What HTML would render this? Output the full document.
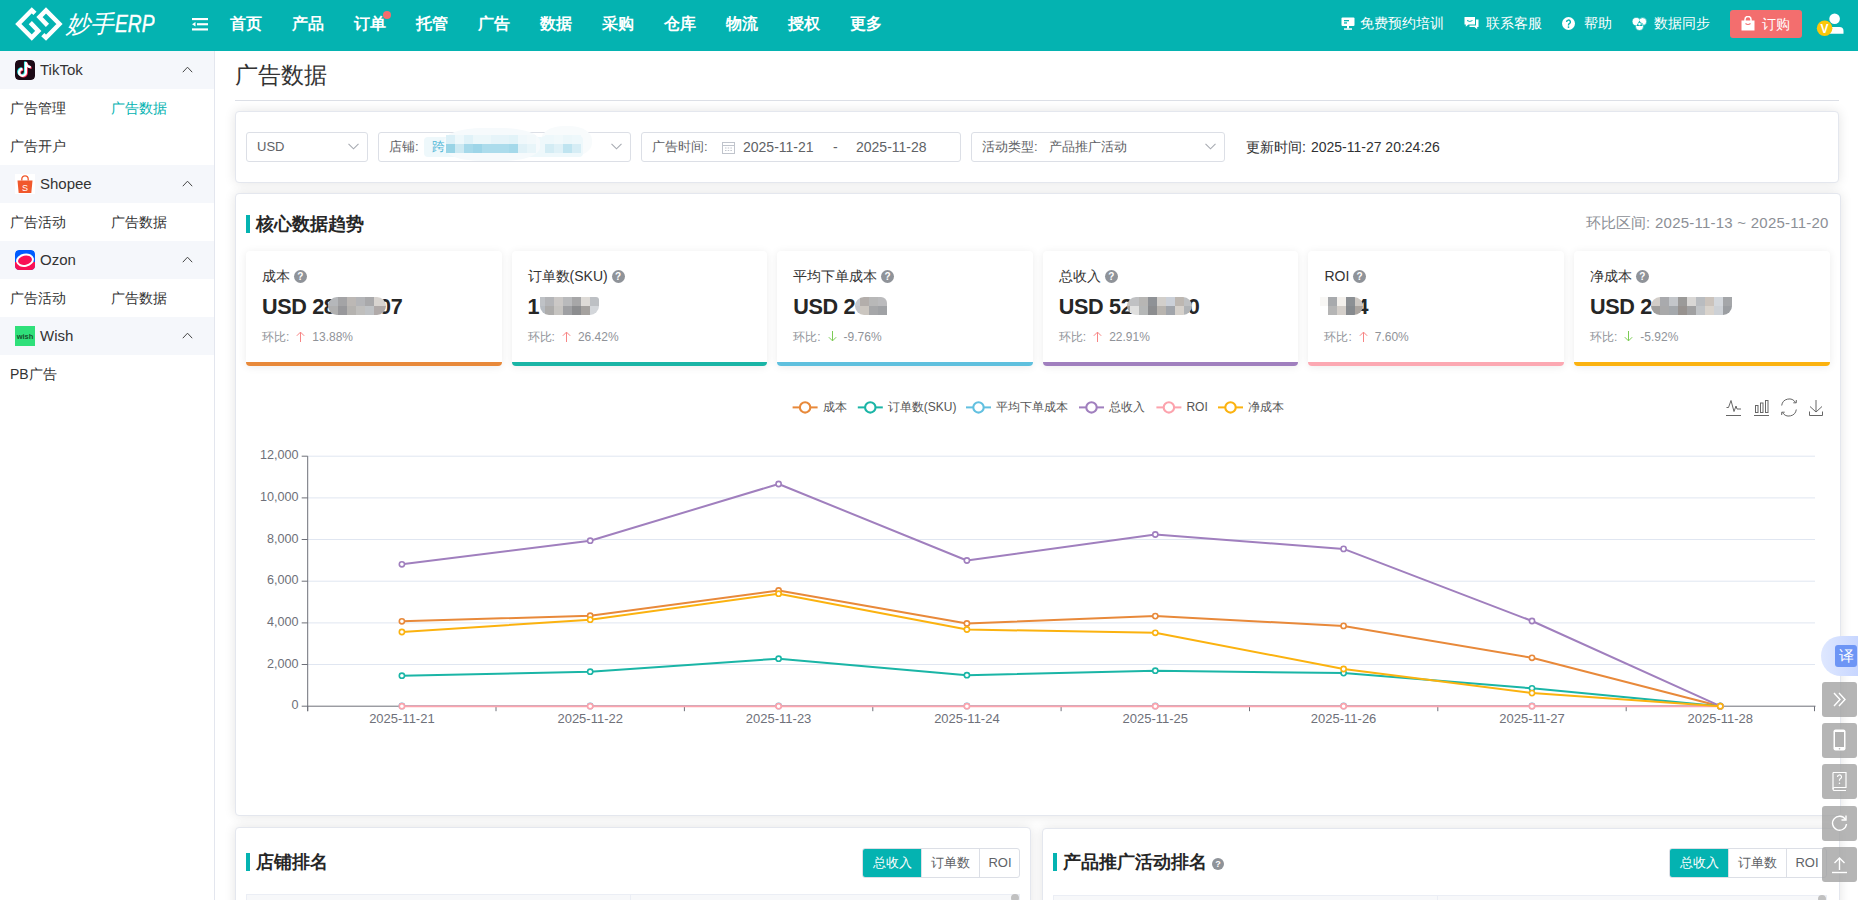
<!DOCTYPE html>
<html><head><meta charset="utf-8">
<style>
*{margin:0;padding:0;box-sizing:border-box}
html,body{width:1858px;height:900px;overflow:hidden;background:#fff;font-family:"Liberation Sans",sans-serif;color:#333}
.abs{position:absolute}
#hdr{position:absolute;left:0;top:0;width:1858px;height:51px;background:#04b3b1}
.nav{position:absolute;top:12.5px;font-size:16px;font-weight:bold;color:#fff;line-height:22px;white-space:nowrap}
.rnav{position:absolute;top:14px;font-size:14px;color:#fff;line-height:18px;white-space:nowrap}
#side{position:absolute;left:0;top:51px;width:215px;height:849px;background:#fff;border-right:1px solid #e3e6ee}
.gh{position:absolute;left:0;width:214px;height:38px;background:#f5f7fb}
.gh .t{position:absolute;left:40px;top:9px;font-size:15px;line-height:20px;color:#333}
.gh .ic{position:absolute;left:15px;top:9px;width:20px;height:20px;border-radius:4px}
.gh svg.chev{position:absolute;left:182px;top:15px}
.si{position:absolute;font-size:14px;line-height:18px;color:#333;white-space:nowrap}
.card{position:absolute;background:#fff;border:1px solid #e4e7ee;border-radius:4px;box-shadow:0 0 12px rgba(0,0,0,0.11)}
.sel{position:absolute;height:30px;border:1px solid #dcdfe6;border-radius:3px;background:#fff;font-size:13px;color:#606266;line-height:28px;white-space:nowrap}
.chevd{position:absolute;top:10px}
.ttl{position:absolute;font-size:18px;font-weight:bold;color:#262626;line-height:22px;white-space:nowrap}
.bar{position:absolute;width:4px;height:18px;background:#04b3b1}
.kpi{position:absolute;top:251px;width:255.6px;height:115px;background:#fff;border-radius:4px;box-shadow:0 1px 8px rgba(0,0,0,0.08);overflow:hidden}
.kpi .lb{position:absolute;left:16px;top:16px;font-size:14px;line-height:18px;color:#333;white-space:nowrap}
.kpi .val{position:absolute;left:16px;top:42.5px;font-size:21.6px;letter-spacing:-0.35px;font-weight:bold;line-height:26px;color:#262626;white-space:nowrap}
.kpi .hb{position:absolute;left:16px;top:78px;font-size:12px;line-height:16px;color:#909399;white-space:nowrap}
.kpi .bt{position:absolute;left:0;bottom:0;width:100%;height:4px}
.q{display:inline-block;width:13px;height:13px;border-radius:50%;background:#8f9399;color:#fff;font-size:10px;line-height:13px;text-align:center;font-weight:bold;vertical-align:1px}
.mos{position:absolute;display:grid}
.mos i{display:block}
.fb{position:absolute;left:1822px;width:35px;height:35px;background:rgba(160,160,160,0.78);border-radius:3px}
.seg{position:absolute;height:30px;border:1px solid #dcdfe6;border-radius:3px;overflow:hidden;font-size:13px;line-height:28px;color:#606266;white-space:nowrap;background:#fff}
.seg span{position:absolute;top:0;height:28px;text-align:center}
</style></head>
<body>
<!-- HEADER -->
<div id="hdr">
  <svg class="abs" style="left:12px;top:4px" width="54" height="40" viewBox="0 0 1215 900">
    <g fill="none" stroke="#fff" stroke-width="100" stroke-linejoin="miter" stroke-linecap="butt" stroke-miterlimit="10">
      <polyline points="517,212 445,142 142,450 445,755 592,605 412,420"/>
      <polyline points="693,688 765,758 1068,450 765,145 618,295 798,480"/>
    </g>
  </svg>
  <div class="abs" style="left:66px;top:6px;font-size:24px;line-height:36px;color:#fff;font-style:italic;white-space:nowrap">妙手<span style="display:inline-block;transform:scaleX(0.8);transform-origin:0 50%;-webkit-text-stroke:0.4px #fff;margin-left:1px">ERP</span></div>
  <svg class="abs" style="left:192px;top:18px" width="16" height="12.5" viewBox="0 0 16 14" preserveAspectRatio="none">
    <rect x="0" y="0" width="16" height="2.4" fill="#fff"/><rect x="5" y="5.8" width="11" height="2.4" fill="#fff"/><rect x="0" y="11.6" width="16" height="2.4" fill="#fff"/><polygon points="0,7 3.5,4.5 3.5,9.5" fill="#fff"/>
  </svg>
  <div class="nav" style="left:230px">首页</div>
  <div class="nav" style="left:292px">产品</div>
  <div class="nav" style="left:354px">订单</div>
  <div class="abs" style="left:383px;top:11px;width:8px;height:8px;border-radius:50%;background:#f56c6c"></div>
  <div class="nav" style="left:416px">托管</div>
  <div class="nav" style="left:478px">广告</div>
  <div class="nav" style="left:540px">数据</div>
  <div class="nav" style="left:602px">采购</div>
  <div class="nav" style="left:664px">仓库</div>
  <div class="nav" style="left:726px">物流</div>
  <div class="nav" style="left:788px">授权</div>
  <div class="nav" style="left:850px">更多</div>
  <!-- right -->
  <div class="rnav" style="left:1360px">免费预约培训</div>
  <div class="rnav" style="left:1486px">联系客服</div>
  <div class="rnav" style="left:1584px">帮助</div>
  <div class="rnav" style="left:1654px">数据同步</div>
  <div class="abs" style="left:1730px;top:10px;width:72px;height:28px;background:#f36e6e;border-radius:3px"></div>
  <div class="rnav" style="left:1762px;top:15px">订购</div>

  <svg class="abs" style="left:1341px;top:17px" width="14" height="13" viewBox="0 0 14 13"><rect x="0.5" y="0.5" width="13" height="8.5" rx="1" fill="#fff"/><rect x="3" y="3" width="5" height="1.3" fill="#04b3b1"/><rect x="3" y="5.3" width="3" height="1.3" fill="#04b3b1"/><rect x="6" y="9" width="2" height="2.5" fill="#fff"/><rect x="3" y="11.3" width="8" height="1.5" fill="#fff"/></svg>
  <svg class="abs" style="left:1464px;top:16px" width="15" height="14" viewBox="0 0 15 14"><path d="M0.5 1h10.5v7.5H4.5L1.8 10.8V8.5H0.5z" fill="#fff"/><path d="M12 3.5h2.5v7.5h-1.3v2.2L10.5 11H5.5V9.5h6.5z" fill="#fff"/><path d="M3 4.5q2.8 2 5.5 0" fill="none" stroke="#04b3b1" stroke-width="1"/></svg>
  <svg class="abs" style="left:1562px;top:17px" width="13" height="13" viewBox="0 0 13 13"><circle cx="6.5" cy="6.5" r="6.5" fill="#fff"/><path d="M4.6 5a1.9 1.9 0 1 1 2.7 1.7c-.5.3-.8.6-.8 1.2v.5" fill="none" stroke="#04b3b1" stroke-width="1.4"/><circle cx="6.5" cy="10.1" r="0.9" fill="#04b3b1"/></svg>
  <svg class="abs" style="left:1632px;top:16.5px" width="15" height="14" viewBox="0 0 15 14"><g fill="#fff" stroke="#04b3b1" stroke-width="0.7"><circle cx="4.3" cy="4.6" r="4"/><circle cx="10.7" cy="4.6" r="4"/><circle cx="7.5" cy="9.6" r="4"/></g><circle cx="4.3" cy="4.6" r="3.6" fill="#fff"/><polygon points="7.5,3.6 4.4,8.9 10.6,8.9" fill="#04b3b1"/><circle cx="7.5" cy="7.1" r="1.3" fill="#fff"/></svg>
  <svg class="abs" style="left:1741px;top:16px" width="14" height="15" viewBox="0 0 14 15"><path d="M0.5 4.5h13v10h-13z" fill="#fff"/><path d="M4 6.5V3.5a3 3 0 0 1 6 0v3" fill="none" stroke="#fff" stroke-width="1.5"/><path d="M4.5 7.5q2.5 2 5 0" fill="none" stroke="#f36e6e" stroke-width="1.2"/></svg>
  <svg class="abs" style="left:1815px;top:12px" width="32" height="26" viewBox="0 0 32 26"><circle cx="19.6" cy="6.8" r="5.3" fill="#fff"/><path d="M13 21.7V18.5a3.5 3.5 0 0 1 3.5-3.5h8a4 4 0 0 1 4 4v2.7z" fill="#fff"/><circle cx="9.6" cy="16.2" r="7.8" fill="#fbc70a"/><text x="9.6" y="20.6" font-size="12" font-weight="bold" fill="#fff" text-anchor="middle" font-family="Liberation Sans">V</text></svg>
</div>

<!-- SIDEBAR -->
<div id="side">
  <div class="gh" style="top:0">
    <svg class="ic" width="20" height="20" viewBox="0 0 20 20"><rect width="20" height="20" rx="4" fill="#1c0a16"/>
      <g fill="none" stroke-width="2.3">
      <path d="M10.9 2.3V12.4A3.4 3.4 0 1 1 7.5 9" stroke="#25f4ee" transform="translate(-0.8,-0.6)"/>
      <path d="M10.9 2.3C11.3 5.2 13 6.9 15.8 7.2" stroke="#25f4ee" transform="translate(-0.8,-0.6)"/>
      <path d="M10.9 2.3V12.4A3.4 3.4 0 1 1 7.5 9" stroke="#fe2c55" transform="translate(0.8,0.6)"/>
      <path d="M10.9 2.3C11.3 5.2 13 6.9 15.8 7.2" stroke="#fe2c55" transform="translate(0.8,0.6)"/>
      <path d="M10.9 2.3V12.4A3.4 3.4 0 1 1 7.5 9" stroke="#fff"/>
      <path d="M10.9 2.3C11.3 5.2 13 6.9 15.8 7.2" stroke="#fff"/>
      </g>
    </svg>
    <div class="t">TikTok</div><svg class="chev" width="11" height="7" viewBox="0 0 11 7"><polyline points="0.8,6.2 5.5,1.2 10.2,6.2" fill="none" stroke="#444" stroke-width="1"/></svg>
  </div>
  <div class="si" style="left:10px;top:48px">广告管理</div>
  <div class="si" style="left:111px;top:48px;color:#04b3b1">广告数据</div>
  <div class="si" style="left:10px;top:86px">广告开户</div>
  <div class="gh" style="top:114px">
    <svg class="ic" style="border-radius:0" width="20" height="20" viewBox="0 0 20 20"><rect width="20" height="20" fill="#fff"/>
      <path d="M2.5 6.5h15l-1.2 12.5H3.7z" fill="#f1582c"/>
      <path d="M6.8 6.5V5a3.2 3.2 0 0 1 6.4 0v1.5" fill="none" stroke="#f1582c" stroke-width="1.3"/>
      <text x="10" y="16.5" font-size="9" fill="#fff" text-anchor="middle" font-family="Liberation Sans">S</text>
    </svg>
    <div class="t">Shopee</div><svg class="chev" width="11" height="7" viewBox="0 0 11 7"><polyline points="0.8,6.2 5.5,1.2 10.2,6.2" fill="none" stroke="#444" stroke-width="1"/></svg>
  </div>
  <div class="si" style="left:10px;top:162px">广告活动</div>
  <div class="si" style="left:111px;top:162px">广告数据</div>
  <div class="gh" style="top:190px">
    <svg class="ic" width="20" height="20" viewBox="0 0 20 20"><rect width="20" height="20" rx="4" fill="#005bff"/>
      <path d="M0 12H20V16A4 4 0 0 1 16 20H4A4 4 0 0 1 0 16z" fill="#f91155"/>
      <ellipse cx="10" cy="10.2" rx="8" ry="5.6" fill="#f91155" stroke="#fff" stroke-width="2" transform="rotate(-12 10 10.2)"/>
    </svg>
    <div class="t">Ozon</div><svg class="chev" width="11" height="7" viewBox="0 0 11 7"><polyline points="0.8,6.2 5.5,1.2 10.2,6.2" fill="none" stroke="#444" stroke-width="1"/></svg>
  </div>
  <div class="si" style="left:10px;top:238px">广告活动</div>
  <div class="si" style="left:111px;top:238px">广告数据</div>
  <div class="gh" style="top:266px">
    <svg class="ic" style="border-radius:0" width="20" height="20" viewBox="0 0 20 20"><rect width="20" height="20" fill="#2fe07a"/>
      <text x="10" y="12.8" font-size="7.5" font-weight="bold" fill="#17502c" text-anchor="middle" font-family="Liberation Sans">wish</text>
    </svg>
    <div class="t">Wish</div><svg class="chev" width="11" height="7" viewBox="0 0 11 7"><polyline points="0.8,6.2 5.5,1.2 10.2,6.2" fill="none" stroke="#444" stroke-width="1"/></svg>
  </div>
  <div class="si" style="left:10px;top:314px">PB广告</div>
</div>


<!-- MAIN -->
<div class="abs" style="left:235px;top:61px;font-size:23px;line-height:28px;color:#333;white-space:nowrap">广告数据</div>
<div class="abs" style="left:235px;top:100px;width:1604px;height:1px;background:#dcdfe6"></div>

<!-- filter card -->
<div class="card" style="left:235px;top:111px;width:1604px;height:72px"></div>
<div class="sel" style="left:246px;top:132px;width:122px"><span style="position:absolute;left:10px">USD</span><svg class="chevd" style="left:101px" width="11" height="7" viewBox="0 0 11 7"><polyline points="0.5,0.8 5.5,5.8 10.5,0.8" fill="none" stroke="#a8abb2" stroke-width="1.1"/></svg></div>
<div class="sel" style="left:378px;top:132px;width:253px"><span style="position:absolute;left:10px">店铺:</span><svg class="chevd" style="left:232px" width="11" height="7" viewBox="0 0 11 7"><polyline points="0.5,0.8 5.5,5.8 10.5,0.8" fill="none" stroke="#a8abb2" stroke-width="1.1"/></svg></div>
<div class="abs" style="left:424px;top:137px;width:158px;height:20px;background:#eef8fb;border-radius:4px"></div>
<div class="abs" style="left:444px;top:128px;width:96px;height:33px;border-radius:40%;background:#f6fafc"></div>
<div class="abs" style="left:541px;top:126px;width:51px;height:31px;border-radius:45%;background:#f8fbfc"></div>
<div class="abs" style="left:541px;top:136px;width:42px;height:21px;border-radius:4px;background:#eef8fb"></div>
<div class="abs" style="left:432px;top:138px;font-size:13px;line-height:18px;color:#4fb6d6">跨</div>
<div class="mos" style="left:446.4px;top:135px;grid-template-columns:repeat(10,8.94px);grid-template-rows:repeat(2,9px)"><i style="background:#dcf0f7"></i><i style="background:#eef8fb"></i><i style="background:#e0f2f8"></i><i style="background:#ecf7fa"></i><i style="background:#ecf7fa"></i><i style="background:#e6f4f9"></i><i style="background:#e6f4f9"></i><i style="background:#e2f3f8"></i><i style="background:#f0f8fb"></i><i style="background:#f3f9fb"></i><i style="background:#99d4e6"></i><i style="background:#cde9f2"></i><i style="background:#a6d9ea"></i><i style="background:#9dd5e8"></i><i style="background:#acdcec"></i><i style="background:#acdcec"></i><i style="background:#acdcec"></i><i style="background:#a5d9ea"></i><i style="background:#e0f1f7"></i><i style="background:#e8f5f9"></i></div>
<div class="mos" style="left:545px;top:135px;grid-template-columns:repeat(4,8.93px);grid-template-rows:repeat(2,9px)"><i style="background:#eef8fb"></i><i style="background:#f1f9fb"></i><i style="background:#ecf7fa"></i><i style="background:#eef8fb"></i><i style="background:#d3ecf4"></i><i style="background:#dff1f7"></i><i style="background:#bfe4f0"></i><i style="background:#d6edf5"></i></div>
<div class="sel" style="left:641px;top:132px;width:320px"><span style="position:absolute;left:10px">广告时间:</span>
  <svg class="abs" style="left:80px;top:8px" width="13" height="13" viewBox="0 0 13 13"><rect x="0.5" y="1.5" width="12" height="11" fill="none" stroke="#c0c4cc"/><line x1="0.5" y1="4.5" x2="12.5" y2="4.5" stroke="#c0c4cc"/><g fill="#c0c4cc"><rect x="3" y="6.5" width="1.5" height="1"/><rect x="5.7" y="6.5" width="1.5" height="1"/><rect x="8.4" y="6.5" width="1.5" height="1"/><rect x="3" y="9" width="1.5" height="1"/><rect x="5.7" y="9" width="1.5" height="1"/><rect x="8.4" y="9" width="1.5" height="1"/></g></svg>
  <span style="position:absolute;left:101px;font-size:14px">2025-11-21</span>
  <span style="position:absolute;left:191px;font-size:14px">-</span>
  <span style="position:absolute;left:214px;font-size:14px">2025-11-28</span>
</div>
<div class="sel" style="left:971px;top:132px;width:254px"><span style="position:absolute;left:10px">活动类型:</span><span style="position:absolute;left:77px">产品推广活动</span><svg class="chevd" style="left:233px" width="11" height="7" viewBox="0 0 11 7"><polyline points="0.5,0.8 5.5,5.8 10.5,0.8" fill="none" stroke="#a8abb2" stroke-width="1.1"/></svg></div>
<div class="abs" style="left:1246px;top:138px;font-size:14px;line-height:18px;color:#303133;white-space:nowrap">更新时间:<span style="margin-left:5px">2025-11-27 20:24:26</span></div>

<!-- chart card -->
<div class="card" style="left:235px;top:193px;width:1606px;height:623px"></div>
<div class="bar" style="left:246px;top:215px"></div>
<div class="ttl" style="left:256px;top:213px">核心数据趋势</div>
<div id="hbq" class="abs" style="left:1586px;top:214px;font-size:14.5px;line-height:18px;color:#8c8f96;white-space:nowrap">环比区间:<span style="margin-left:5px;font-size:15px;letter-spacing:0.23px">2025-11-13 ~ 2025-11-20</span></div>
<div class="kpi" style="left:246.0px"><div class="lb">成本 <span class="q">?</span></div><div class="val">USD 28<span style="position:absolute;left:117px">07</span></div><div class="hb">环比:<svg width="9" height="11" viewBox="0 0 9 11" style="vertical-align:-1px;margin:0 7px 0 7px"><path d="M4.5 11V1.2M0.8 4.8L4.5 1.1L8.2 4.8" fill="none" stroke="#f78585" stroke-width="1"/></svg>13.88%</div><div class="bt" style="background:#e8893a"></div></div>
<div class="kpi" style="left:511.6px"><div class="lb">订单数(SKU) <span class="q">?</span></div><div class="val">1</div><div class="hb">环比:<svg width="9" height="11" viewBox="0 0 9 11" style="vertical-align:-1px;margin:0 7px 0 7px"><path d="M4.5 11V1.2M0.8 4.8L4.5 1.1L8.2 4.8" fill="none" stroke="#f78585" stroke-width="1"/></svg>26.42%</div><div class="bt" style="background:#1ab5a6"></div></div>
<div class="kpi" style="left:777.2px"><div class="lb">平均下单成本 <span class="q">?</span></div><div class="val">USD 2</div><div class="hb">环比:<svg width="9" height="11" viewBox="0 0 9 11" style="vertical-align:-1px;margin:0 7px 0 7px"><path d="M4.5 0V9.8M0.8 6.2L4.5 9.9L8.2 6.2" fill="none" stroke="#7ccb55" stroke-width="1"/></svg>-9.76%</div><div class="bt" style="background:#5fc0de"></div></div>
<div class="kpi" style="left:1042.8px"><div class="lb">总收入 <span class="q">?</span></div><div class="val">USD 52<span style="position:absolute;left:129px">0</span></div><div class="hb">环比:<svg width="9" height="11" viewBox="0 0 9 11" style="vertical-align:-1px;margin:0 7px 0 7px"><path d="M4.5 11V1.2M0.8 4.8L4.5 1.1L8.2 4.8" fill="none" stroke="#f78585" stroke-width="1"/></svg>22.91%</div><div class="bt" style="background:#a07fbe"></div></div>
<div class="kpi" style="left:1308.4px"><div class="lb">ROI <span class="q">?</span></div><div class="val"><span style="position:absolute;left:32px">4</span></div><div class="hb">环比:<svg width="9" height="11" viewBox="0 0 9 11" style="vertical-align:-1px;margin:0 7px 0 7px"><path d="M4.5 11V1.2M0.8 4.8L4.5 1.1L8.2 4.8" fill="none" stroke="#f78585" stroke-width="1"/></svg>7.60%</div><div class="bt" style="background:#fca8b2"></div></div>
<div class="kpi" style="left:1574.0px"><div class="lb">净成本 <span class="q">?</span></div><div class="val">USD 2</div><div class="hb">环比:<svg width="9" height="11" viewBox="0 0 9 11" style="vertical-align:-1px;margin:0 7px 0 7px"><path d="M4.5 0V9.8M0.8 6.2L4.5 9.9L8.2 6.2" fill="none" stroke="#7ccb55" stroke-width="1"/></svg>-5.92%</div><div class="bt" style="background:#fbb20f"></div></div>
<div class="mos" style="left:328.0px;top:297.1px;grid-template-columns:1.10px 9.04px 9.04px 9.04px 9.04px 9.04px 9.04px 2.50px;grid-template-rows:8.8px 8.9px;border-radius:9px;overflow:hidden"><i style="background:#b5b7ba"></i><i style="background:#b5b7ba"></i><i style="background:#a4a4a6"></i><i style="background:#bcb8b5"></i><i style="background:#b4b5b8"></i><i style="background:#a9a9ab"></i><i style="background:#d8d4d0"></i><i style="background:#d8d4d0"></i><i style="background:#b0b0b0"></i><i style="background:#b0b0b0"></i><i style="background:#98989b"></i><i style="background:#b5b3b0"></i><i style="background:#c0bfbd"></i><i style="background:#bfc2c5"></i><i style="background:#b0aaa9"></i><i style="background:#b0aaa9"></i></div>
<div class="mos" style="left:539.8px;top:297.1px;grid-template-columns:5.20px 9.04px 9.04px 9.04px 9.04px 9.04px 9.04px;grid-template-rows:8.8px 8.9px;border-radius:0 3px 9px 9px;overflow:hidden"><i style="background:#bfc2c6"></i><i style="background:#b4b5b8"></i><i style="background:#cbc8c6"></i><i style="background:#b9babc"></i><i style="background:#a7a7a8"></i><i style="background:#dedbd7"></i><i style="background:#bdc0c4"></i><i style="background:#b7bcc2"></i><i style="background:#adacab"></i><i style="background:#c6c4c1"></i><i style="background:#9fa0a3"></i><i style="background:#8c8d8f"></i><i style="background:#a5a29f"></i><i style="background:#d3d6da"></i></div>
<div class="mos" style="left:854.9px;top:297.1px;grid-template-columns:5.20px 9.04px 9.04px 8.60px;grid-template-rows:8.8px 8.9px;border-radius:9px 6px 0 9px;overflow:hidden"><i style="background:#c5c9cf"></i><i style="background:#b3aeab"></i><i style="background:#b8b8b8"></i><i style="background:#bbbbbd"></i><i style="background:#c2c5ca"></i><i style="background:#cbc6c0"></i><i style="background:#a6a7a9"></i><i style="background:#a0a2a5"></i></div>
<div class="mos" style="left:1126.9px;top:297.1px;grid-template-columns:3.00px 9.04px 9.04px 9.04px 9.04px 9.04px 9.04px 7.75px;grid-template-rows:8.8px 8.9px;border-radius:9px;overflow:hidden"><i style="background:#c4bfba"></i><i style="background:#c0c1c3"></i><i style="background:#b7b6b4"></i><i style="background:#8f9296"></i><i style="background:#d2cfcb"></i><i style="background:#cbd0d8"></i><i style="background:#bdb7b1"></i><i style="background:#bec0c2"></i><i style="background:#a6a4a2"></i><i style="background:#e0e0df"></i><i style="background:#b5b7b7"></i><i style="background:#8c8d8f"></i><i style="background:#b8b4af"></i><i style="background:#a1a5ab"></i><i style="background:#d6d1cb"></i><i style="background:#b0b3b6"></i></div>
<div class="mos" style="left:1320.3px;top:297.1px;grid-template-columns:7.75px 9.04px 9.04px 9.04px 8.20px;grid-template-rows:8.8px 8.9px;border-radius:0 9px 9px 0;overflow:hidden"><i style="background:#f8f7f5"></i><i style="background:#a8aaad"></i><i style="background:#f3f0ec"></i><i style="background:#8c9094"></i><i style="background:#cdc8c3"></i><i style="background:#ffffff"></i><i style="background:#b5b5b5"></i><i style="background:#d4cfca"></i><i style="background:#868a8e"></i><i style="background:#aba5a0"></i></div>
<div class="mos" style="left:1650.5px;top:297.1px;grid-template-columns:9.50px 9.04px 9.04px 9.04px 9.04px 9.04px 9.04px 9.04px 9.04px;grid-template-rows:8.8px 8.9px;border-radius:9px 0 9px 9px;overflow:hidden"><i style="background:#d2cdc8"></i><i style="background:#a9aaad"></i><i style="background:#c3c6ca"></i><i style="background:#9b9a99"></i><i style="background:#d9d7d5"></i><i style="background:#b9bcc0"></i><i style="background:#cbc3bc"></i><i style="background:#d3d7dc"></i><i style="background:#a4a6a9"></i><i style="background:#a09e9c"></i><i style="background:#a9a9aa"></i><i style="background:#a4a8ac"></i><i style="background:#97928f"></i><i style="background:#a1a1a2"></i><i style="background:#c1c4c7"></i><i style="background:#d9d3cc"></i><i style="background:#cdd1d6"></i><i style="background:#9b9ea2"></i></div>
<svg class="abs" style="left:0;top:0" width="1858" height="900" viewBox="0 0 1858 900">
<line x1="301.7" y1="706.2" x2="307.7" y2="706.2" stroke="#6e7079" stroke-width="1"/>
<text x="298.5" y="709.2" text-anchor="end" font-size="12.6" fill="#6e7079" font-family="Liberation Sans">0</text>
<line x1="307.7" y1="664.5" x2="1815" y2="664.5" stroke="#e0e6f1" stroke-width="1"/>
<line x1="301.7" y1="664.5" x2="307.7" y2="664.5" stroke="#6e7079" stroke-width="1"/>
<text x="298.5" y="667.5" text-anchor="end" font-size="12.6" fill="#6e7079" font-family="Liberation Sans">2,000</text>
<line x1="307.7" y1="622.9" x2="1815" y2="622.9" stroke="#e0e6f1" stroke-width="1"/>
<line x1="301.7" y1="622.9" x2="307.7" y2="622.9" stroke="#6e7079" stroke-width="1"/>
<text x="298.5" y="625.9" text-anchor="end" font-size="12.6" fill="#6e7079" font-family="Liberation Sans">4,000</text>
<line x1="307.7" y1="581.2" x2="1815" y2="581.2" stroke="#e0e6f1" stroke-width="1"/>
<line x1="301.7" y1="581.2" x2="307.7" y2="581.2" stroke="#6e7079" stroke-width="1"/>
<text x="298.5" y="584.2" text-anchor="end" font-size="12.6" fill="#6e7079" font-family="Liberation Sans">6,000</text>
<line x1="307.7" y1="539.5" x2="1815" y2="539.5" stroke="#e0e6f1" stroke-width="1"/>
<line x1="301.7" y1="539.5" x2="307.7" y2="539.5" stroke="#6e7079" stroke-width="1"/>
<text x="298.5" y="542.5" text-anchor="end" font-size="12.6" fill="#6e7079" font-family="Liberation Sans">8,000</text>
<line x1="307.7" y1="497.9" x2="1815" y2="497.9" stroke="#e0e6f1" stroke-width="1"/>
<line x1="301.7" y1="497.9" x2="307.7" y2="497.9" stroke="#6e7079" stroke-width="1"/>
<text x="298.5" y="500.9" text-anchor="end" font-size="12.6" fill="#6e7079" font-family="Liberation Sans">10,000</text>
<line x1="307.7" y1="456.2" x2="1815" y2="456.2" stroke="#e0e6f1" stroke-width="1"/>
<line x1="301.7" y1="456.2" x2="307.7" y2="456.2" stroke="#6e7079" stroke-width="1"/>
<text x="298.5" y="459.2" text-anchor="end" font-size="12.6" fill="#6e7079" font-family="Liberation Sans">12,000</text>
<line x1="307.7" y1="456.2" x2="307.7" y2="711.2" stroke="#6e7079" stroke-width="1"/>
<line x1="307.7" y1="706.2" x2="1815.5" y2="706.2" stroke="#6e7079" stroke-width="1"/>
<line x1="307.7" y1="706.2" x2="307.7" y2="711.2" stroke="#6e7079" stroke-width="1"/>
<line x1="496.0" y1="706.2" x2="496.0" y2="711.2" stroke="#6e7079" stroke-width="1"/>
<line x1="684.4" y1="706.2" x2="684.4" y2="711.2" stroke="#6e7079" stroke-width="1"/>
<line x1="872.8" y1="706.2" x2="872.8" y2="711.2" stroke="#6e7079" stroke-width="1"/>
<line x1="1061.1" y1="706.2" x2="1061.1" y2="711.2" stroke="#6e7079" stroke-width="1"/>
<line x1="1249.5" y1="706.2" x2="1249.5" y2="711.2" stroke="#6e7079" stroke-width="1"/>
<line x1="1437.8" y1="706.2" x2="1437.8" y2="711.2" stroke="#6e7079" stroke-width="1"/>
<line x1="1626.2" y1="706.2" x2="1626.2" y2="711.2" stroke="#6e7079" stroke-width="1"/>
<line x1="1814.5" y1="706.2" x2="1814.5" y2="711.2" stroke="#6e7079" stroke-width="1"/>
<text x="401.9" y="722.8" text-anchor="middle" font-size="13" fill="#6e7079" font-family="Liberation Sans">2025-11-21</text>
<text x="590.2" y="722.8" text-anchor="middle" font-size="13" fill="#6e7079" font-family="Liberation Sans">2025-11-22</text>
<text x="778.6" y="722.8" text-anchor="middle" font-size="13" fill="#6e7079" font-family="Liberation Sans">2025-11-23</text>
<text x="966.9" y="722.8" text-anchor="middle" font-size="13" fill="#6e7079" font-family="Liberation Sans">2025-11-24</text>
<text x="1155.3" y="722.8" text-anchor="middle" font-size="13" fill="#6e7079" font-family="Liberation Sans">2025-11-25</text>
<text x="1343.6" y="722.8" text-anchor="middle" font-size="13" fill="#6e7079" font-family="Liberation Sans">2025-11-26</text>
<text x="1532.0" y="722.8" text-anchor="middle" font-size="13" fill="#6e7079" font-family="Liberation Sans">2025-11-27</text>
<text x="1720.3" y="722.8" text-anchor="middle" font-size="13" fill="#6e7079" font-family="Liberation Sans">2025-11-28</text>
<polyline points="401.9,621.3 590.2,615.7 778.6,590.5 966.9,623.5 1155.3,616.1 1343.6,625.9 1532.0,657.8 1720.3,706.2" fill="none" stroke="#e8893a" stroke-width="2" stroke-linejoin="round"/>
<circle cx="401.9" cy="621.3" r="2.6" fill="#fff" stroke="#e8893a" stroke-width="1.6"/>
<circle cx="590.2" cy="615.7" r="2.6" fill="#fff" stroke="#e8893a" stroke-width="1.6"/>
<circle cx="778.6" cy="590.5" r="2.6" fill="#fff" stroke="#e8893a" stroke-width="1.6"/>
<circle cx="966.9" cy="623.5" r="2.6" fill="#fff" stroke="#e8893a" stroke-width="1.6"/>
<circle cx="1155.3" cy="616.1" r="2.6" fill="#fff" stroke="#e8893a" stroke-width="1.6"/>
<circle cx="1343.6" cy="625.9" r="2.6" fill="#fff" stroke="#e8893a" stroke-width="1.6"/>
<circle cx="1532.0" cy="657.8" r="2.6" fill="#fff" stroke="#e8893a" stroke-width="1.6"/>
<circle cx="1720.3" cy="706.2" r="2.6" fill="#fff" stroke="#e8893a" stroke-width="1.6"/>
<polyline points="401.9,675.7 590.2,671.7 778.6,658.7 966.9,675.2 1155.3,670.7 1343.6,673.1 1532.0,688.3 1720.3,706.2" fill="none" stroke="#1ab5a6" stroke-width="2" stroke-linejoin="round"/>
<circle cx="401.9" cy="675.7" r="2.6" fill="#fff" stroke="#1ab5a6" stroke-width="1.6"/>
<circle cx="590.2" cy="671.7" r="2.6" fill="#fff" stroke="#1ab5a6" stroke-width="1.6"/>
<circle cx="778.6" cy="658.7" r="2.6" fill="#fff" stroke="#1ab5a6" stroke-width="1.6"/>
<circle cx="966.9" cy="675.2" r="2.6" fill="#fff" stroke="#1ab5a6" stroke-width="1.6"/>
<circle cx="1155.3" cy="670.7" r="2.6" fill="#fff" stroke="#1ab5a6" stroke-width="1.6"/>
<circle cx="1343.6" cy="673.1" r="2.6" fill="#fff" stroke="#1ab5a6" stroke-width="1.6"/>
<circle cx="1532.0" cy="688.3" r="2.6" fill="#fff" stroke="#1ab5a6" stroke-width="1.6"/>
<circle cx="1720.3" cy="706.2" r="2.6" fill="#fff" stroke="#1ab5a6" stroke-width="1.6"/>
<polyline points="401.9,706.0 590.2,706.0 778.6,706.0 966.9,706.0 1155.3,706.0 1343.6,706.0 1532.0,706.0 1720.3,706.0" fill="none" stroke="#62c0e0" stroke-width="2" stroke-linejoin="round"/>
<circle cx="401.9" cy="706.0" r="2.6" fill="#fff" stroke="#62c0e0" stroke-width="1.6"/>
<circle cx="590.2" cy="706.0" r="2.6" fill="#fff" stroke="#62c0e0" stroke-width="1.6"/>
<circle cx="778.6" cy="706.0" r="2.6" fill="#fff" stroke="#62c0e0" stroke-width="1.6"/>
<circle cx="966.9" cy="706.0" r="2.6" fill="#fff" stroke="#62c0e0" stroke-width="1.6"/>
<circle cx="1155.3" cy="706.0" r="2.6" fill="#fff" stroke="#62c0e0" stroke-width="1.6"/>
<circle cx="1343.6" cy="706.0" r="2.6" fill="#fff" stroke="#62c0e0" stroke-width="1.6"/>
<circle cx="1532.0" cy="706.0" r="2.6" fill="#fff" stroke="#62c0e0" stroke-width="1.6"/>
<circle cx="1720.3" cy="706.0" r="2.6" fill="#fff" stroke="#62c0e0" stroke-width="1.6"/>
<polyline points="401.9,564.3 590.2,540.7 778.6,484.0 966.9,560.5 1155.3,534.5 1343.6,548.9 1532.0,621.0 1720.3,706.2" fill="none" stroke="#a07fbe" stroke-width="2" stroke-linejoin="round"/>
<circle cx="401.9" cy="564.3" r="2.6" fill="#fff" stroke="#a07fbe" stroke-width="1.6"/>
<circle cx="590.2" cy="540.7" r="2.6" fill="#fff" stroke="#a07fbe" stroke-width="1.6"/>
<circle cx="778.6" cy="484.0" r="2.6" fill="#fff" stroke="#a07fbe" stroke-width="1.6"/>
<circle cx="966.9" cy="560.5" r="2.6" fill="#fff" stroke="#a07fbe" stroke-width="1.6"/>
<circle cx="1155.3" cy="534.5" r="2.6" fill="#fff" stroke="#a07fbe" stroke-width="1.6"/>
<circle cx="1343.6" cy="548.9" r="2.6" fill="#fff" stroke="#a07fbe" stroke-width="1.6"/>
<circle cx="1532.0" cy="621.0" r="2.6" fill="#fff" stroke="#a07fbe" stroke-width="1.6"/>
<circle cx="1720.3" cy="706.2" r="2.6" fill="#fff" stroke="#a07fbe" stroke-width="1.6"/>
<polyline points="401.9,706.2 590.2,706.2 778.6,706.2 966.9,706.2 1155.3,706.2 1343.6,706.2 1532.0,706.2 1720.3,706.2" fill="none" stroke="#fca3ad" stroke-width="2" stroke-linejoin="round"/>
<circle cx="401.9" cy="706.2" r="2.6" fill="#fff" stroke="#fca3ad" stroke-width="1.6"/>
<circle cx="590.2" cy="706.2" r="2.6" fill="#fff" stroke="#fca3ad" stroke-width="1.6"/>
<circle cx="778.6" cy="706.2" r="2.6" fill="#fff" stroke="#fca3ad" stroke-width="1.6"/>
<circle cx="966.9" cy="706.2" r="2.6" fill="#fff" stroke="#fca3ad" stroke-width="1.6"/>
<circle cx="1155.3" cy="706.2" r="2.6" fill="#fff" stroke="#fca3ad" stroke-width="1.6"/>
<circle cx="1343.6" cy="706.2" r="2.6" fill="#fff" stroke="#fca3ad" stroke-width="1.6"/>
<circle cx="1532.0" cy="706.2" r="2.6" fill="#fff" stroke="#fca3ad" stroke-width="1.6"/>
<circle cx="1720.3" cy="706.2" r="2.6" fill="#fff" stroke="#fca3ad" stroke-width="1.6"/>
<polyline points="401.9,632.0 590.2,619.7 778.6,593.7 966.9,629.5 1155.3,632.8 1343.6,669.0 1532.0,693.1 1720.3,706.2" fill="none" stroke="#fbb20f" stroke-width="2" stroke-linejoin="round"/>
<circle cx="401.9" cy="632.0" r="2.6" fill="#fff" stroke="#fbb20f" stroke-width="1.6"/>
<circle cx="590.2" cy="619.7" r="2.6" fill="#fff" stroke="#fbb20f" stroke-width="1.6"/>
<circle cx="778.6" cy="593.7" r="2.6" fill="#fff" stroke="#fbb20f" stroke-width="1.6"/>
<circle cx="966.9" cy="629.5" r="2.6" fill="#fff" stroke="#fbb20f" stroke-width="1.6"/>
<circle cx="1155.3" cy="632.8" r="2.6" fill="#fff" stroke="#fbb20f" stroke-width="1.6"/>
<circle cx="1343.6" cy="669.0" r="2.6" fill="#fff" stroke="#fbb20f" stroke-width="1.6"/>
<circle cx="1532.0" cy="693.1" r="2.6" fill="#fff" stroke="#fbb20f" stroke-width="1.6"/>
<circle cx="1720.3" cy="706.2" r="2.6" fill="#fff" stroke="#fbb20f" stroke-width="1.6"/>
<line x1="792.6" y1="407.4" x2="817.6" y2="407.4" stroke="#e8893a" stroke-width="2"/>
<circle cx="805.1" cy="407.4" r="5.2" fill="#fff" stroke="#e8893a" stroke-width="2.1"/>
<text x="822.5" y="411" font-size="12" fill="#555" font-family="Liberation Sans">成本</text>
<line x1="857.8" y1="407.4" x2="882.8" y2="407.4" stroke="#1ab5a6" stroke-width="2"/>
<circle cx="870.3" cy="407.4" r="5.2" fill="#fff" stroke="#1ab5a6" stroke-width="2.1"/>
<text x="887.8" y="411" font-size="12" fill="#555" font-family="Liberation Sans">订单数(SKU)</text>
<line x1="966.0" y1="407.4" x2="991.0" y2="407.4" stroke="#62c0e0" stroke-width="2"/>
<circle cx="978.5" cy="407.4" r="5.2" fill="#fff" stroke="#62c0e0" stroke-width="2.1"/>
<text x="996.0" y="411" font-size="12" fill="#555" font-family="Liberation Sans">平均下单成本</text>
<line x1="1079.0" y1="407.4" x2="1104.0" y2="407.4" stroke="#a07fbe" stroke-width="2"/>
<circle cx="1091.5" cy="407.4" r="5.2" fill="#fff" stroke="#a07fbe" stroke-width="2.1"/>
<text x="1109.0" y="411" font-size="12" fill="#555" font-family="Liberation Sans">总收入</text>
<line x1="1156.4" y1="407.4" x2="1181.4" y2="407.4" stroke="#fca3ad" stroke-width="2"/>
<circle cx="1168.9" cy="407.4" r="5.2" fill="#fff" stroke="#fca3ad" stroke-width="2.1"/>
<text x="1186.4" y="411" font-size="12" fill="#555" font-family="Liberation Sans">ROI</text>
<line x1="1218.0" y1="407.4" x2="1243.0" y2="407.4" stroke="#fbb20f" stroke-width="2"/>
<circle cx="1230.5" cy="407.4" r="5.2" fill="#fff" stroke="#fbb20f" stroke-width="2.1"/>
<text x="1248.0" y="411" font-size="12" fill="#555" font-family="Liberation Sans">净成本</text>
<g fill="none" stroke="#666" stroke-width="1">
<polyline points="1726.5,407.5 1728.5,407.5 1731,400.5 1734,411.5 1736,406 1737,409 1741,409"/>
<line x1="1726" y1="415.5" x2="1741" y2="415.5"/>
<rect x="1755.5" y="405.5" width="2.5" height="7" /><rect x="1760.5" y="403" width="2.5" height="9.5"/><rect x="1765.5" y="400.5" width="2.5" height="12"/>
<line x1="1754" y1="415.5" x2="1769" y2="415.5"/>
<path d="M1795.5,402.5 A7.5,7.5 0 0 0 1781.7,405.5"/><path d="M1782.5,412.5 A7.5,7.5 0 0 0 1796.3,409.5"/>
<polyline points="1793.3,402.8 1796.3,402.8 1796.3,400"/><polyline points="1784.7,412.2 1781.7,412.2 1781.7,415"/>
<line x1="1816" y1="400" x2="1816" y2="412"/><polyline points="1810,406.5 1816,412 1822,406.5"/><polyline points="1809.5,411.5 1809.5,415.5 1822.5,415.5 1822.5,411.5"/>
</g>
</svg>

<!-- rank cards -->
<div class="card" style="left:235px;top:827px;width:796px;height:120px"></div>
<div class="bar" style="left:246px;top:853px"></div>
<div class="ttl" style="left:256px;top:851px">店铺排名</div>
<div class="seg" style="left:862px;top:848px;width:158px"><span style="left:0;width:58px;background:#04b3b1;color:#fff">总收入</span><span style="left:58px;width:58px;border-left:1px solid #dcdfe6">订单数</span><span style="left:116px;width:41px;border-left:1px solid #dcdfe6">ROI</span></div>
<div class="abs" style="left:246px;top:894px;width:774px;height:10px;border:1px solid #ebeef5;background:#f7f8fa"></div>
<div class="abs" style="left:630px;top:894px;width:1px;height:10px;background:#ebeef5"></div>

<div class="card" style="left:1042px;top:828px;width:798px;height:120px"></div>
<div class="bar" style="left:1053px;top:853px"></div>
<div class="ttl" style="left:1063px;top:851px">产品推广活动排名 <span class="q" style="width:12px;height:12px;line-height:12px;font-size:9px">?</span></div>
<div class="seg" style="left:1669px;top:848px;width:158px"><span style="left:0;width:58px;background:#04b3b1;color:#fff">总收入</span><span style="left:58px;width:58px;border-left:1px solid #dcdfe6">订单数</span><span style="left:116px;width:41px;border-left:1px solid #dcdfe6">ROI</span></div>
<div class="abs" style="left:1053px;top:895px;width:774px;height:10px;border:1px solid #ebeef5;background:#f7f8fa"></div>
<div class="abs" style="left:1437px;top:895px;width:1px;height:10px;background:#ebeef5"></div>
<div class="abs" style="left:1818px;top:895px;width:8px;height:8px;border-radius:50%;background:#c1c1c1"></div>
<div class="abs" style="left:1011px;top:894px;width:8px;height:8px;border-radius:50%;background:#c1c1c1"></div>

<div class="abs" style="left:1821px;top:636px;width:60px;height:40px;border-radius:20px;background:linear-gradient(90deg,#dfe8ff,#b9cbff)"></div>
<div class="abs" style="left:1835px;top:645px;width:22px;height:22px;border-radius:3px;background:#6d95f5;color:#fff;font-size:15px;line-height:22px;text-align:center">译</div>
<div class="fb" style="top:682px"><svg width="35" height="35" viewBox="0 0 35 35"><g fill="none" stroke="#fff" stroke-width="1.4"><polyline points="12,11 18,17.5 12,24"/><polyline points="17,11 23,17.5 17,24"/></g></svg></div>
<div class="fb" style="top:723px"><svg width="35" height="35" viewBox="0 0 35 35"><rect x="11.5" y="6.5" width="12" height="21" rx="2" fill="#fff"/><rect x="13" y="9" width="9" height="15" fill="#b0b0b0"/><circle cx="17.5" cy="25.8" r="0.8" fill="#b0b0b0"/></svg></div>
<div class="fb" style="top:764px"><svg width="35" height="35" viewBox="0 0 35 35"><g fill="none" stroke="#fff" stroke-width="1.2"><path d="M11 8.5h13v15H12.5a1.5 1.5 0 0 0 0 3H24"/><path d="M11 8.5v16.5"/><path d="M15.5 13a2 2 0 1 1 2.8 1.8c-.6.3-.8.7-.8 1.4v.6"/></g><circle cx="17.5" cy="19.3" r="0.8" fill="#fff"/></svg></div>
<div class="fb" style="top:806px"><svg width="35" height="35" viewBox="0 0 35 35"><g fill="none" stroke="#fff" stroke-width="1.4"><path d="M23.5 13.5A7 7 0 1 0 24.5 18"/><polyline points="24,9.5 24,14 19.5,14"/></g></svg></div>
<div class="fb" style="top:847px"><svg width="35" height="35" viewBox="0 0 35 35"><g fill="none" stroke="#fff" stroke-width="1.4"><line x1="17.5" y1="11" x2="17.5" y2="23"/><polyline points="12.5,16 17.5,11 22.5,16"/><line x1="10" y1="25.5" x2="25" y2="25.5"/></g></svg></div>

</body></html>
